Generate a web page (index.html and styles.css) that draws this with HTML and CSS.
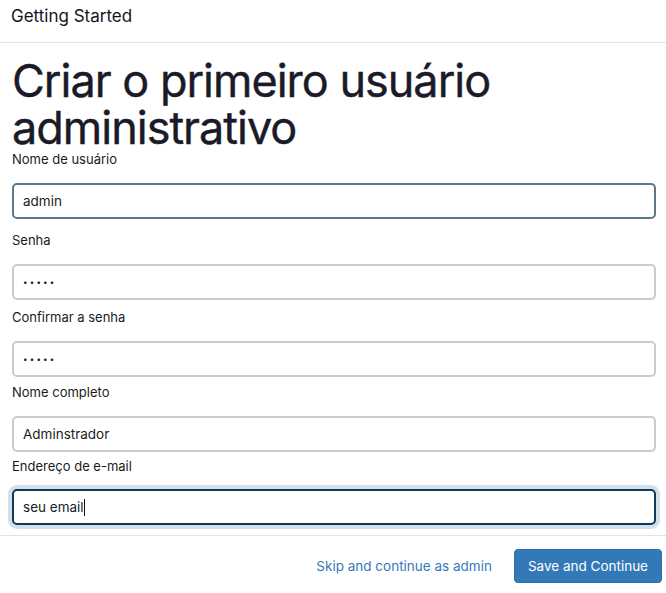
FILE: index.html
```html
<!DOCTYPE html>
<html lang="pt">
<head>
<meta charset="utf-8">
<link rel="stylesheet" href="styles.css">
</head>
<body>
<div class="page">
  <header class="topbar">Getting Started</header>
  <main class="content">
    <h1 class="title">Criar o primeiro usuário administrativo</h1>
    <form class="form">
      <div class="field field--1">
        <label class="label">Nome de usuário</label>
        <input class="input input--hover" type="text" value="admin">
      </div>
      <div class="field field--2">
        <label class="label">Senha</label>
        <input class="input input--pw" type="text" value="•••••">
      </div>
      <div class="field field--3">
        <label class="label">Confirmar a senha</label>
        <input class="input input--pw" type="text" value="•••••">
      </div>
      <div class="field field--4">
        <label class="label">Nome completo</label>
        <input class="input" type="text" value="Adminstrador">
      </div>
      <div class="field field--5">
        <label class="label label--tight">Endereço de e-mail</label>
        <div class="input input--focus"><span>seu email</span><span class="caret"></span></div>
      </div>
    </form>
  </main>
  <footer class="footer">
    <a class="link" href="#">Skip and continue as admin</a>
    <button class="btn" type="button">Save and Continue</button>
  </footer>
</div>
</body>
</html>
```
FILE: styles.css
```css
* { box-sizing: border-box; }
html, body { margin: 0; padding: 0; background: #fff; }
body {
  font-family: Inter, "Noto Sans", sans-serif;
  color: #1b1b25;
  width: 666px;
  height: 593px;
  overflow: hidden;
}
.page { display: flex; flex-direction: column; height: 593px; }
.topbar {
  height: 43px;
  padding: 5px 11px 0;
  font-size: 17px;
  line-height: 22px;
  border-bottom: 1px solid #e3e3e3;
  color: #14141c;
}
.content { padding: 14px 10px 0 12px; flex: 1; }
.title {
  margin: 0;
  font-size: 45px;
  font-weight: 400;
  line-height: 47px;
  letter-spacing: -1px;
  color: #1a1a28;
  -webkit-text-stroke: 0.4px #1a1a28;
}
.form { display: flex; flex-direction: column; }
.field { display: flex; flex-direction: column; }
.field--1 { margin-top: -2px; }
.field--2 { margin-top: 11px; }
.field--3 { margin-top: 7px; }
.field--4 { margin-top: 5px; }
.field--5 { margin-top: 4px; }
.label {
  font-size: 13px;
  line-height: 20px;
  height: 20px;
  margin-bottom: 14px;
  color: #1b1b22;
}
.label--tight { margin-bottom: 13px; }
.input {
  width: 644px;
  height: 36px;
  border: 2px solid #c5cdd2;
  border-radius: 5px;
  padding: 0 9px;
  font-family: Inter, "Noto Sans", sans-serif;
  font-size: 13.5px;
  color: #1b1b22;
  background: #fff;
  outline: none;
  display: flex;
  align-items: center;
}
.input--pw { font-size: 8px; letter-spacing: 2.2px; }
.input--hover { border-color: #5d7888; }
.input--focus {
  border-color: #0d3a5a;
  box-shadow: 0 0 0 4px #d1e0ea;
}
.caret { display: inline-block; width: 1px; height: 17px; background: #111; }
.footer {
  height: 58px;
  border-top: 1px solid #e3e3e3;
  display: flex;
  align-items: flex-start;
  justify-content: flex-end;
  gap: 22px;
  padding: 13px 4px 0 0;
}
.link {
  font-size: 13.5px;
  color: #3779b9;
  text-decoration: none;
  line-height: 34px;
}
.btn {
  height: 34px;
  padding: 0 13px;
  border: 1px solid #2f6ea6;
  border-radius: 4px;
  background: #3379b8;
  color: #fff;
  font-family: Inter, "Noto Sans", sans-serif;
  font-size: 13.5px;
}
```
